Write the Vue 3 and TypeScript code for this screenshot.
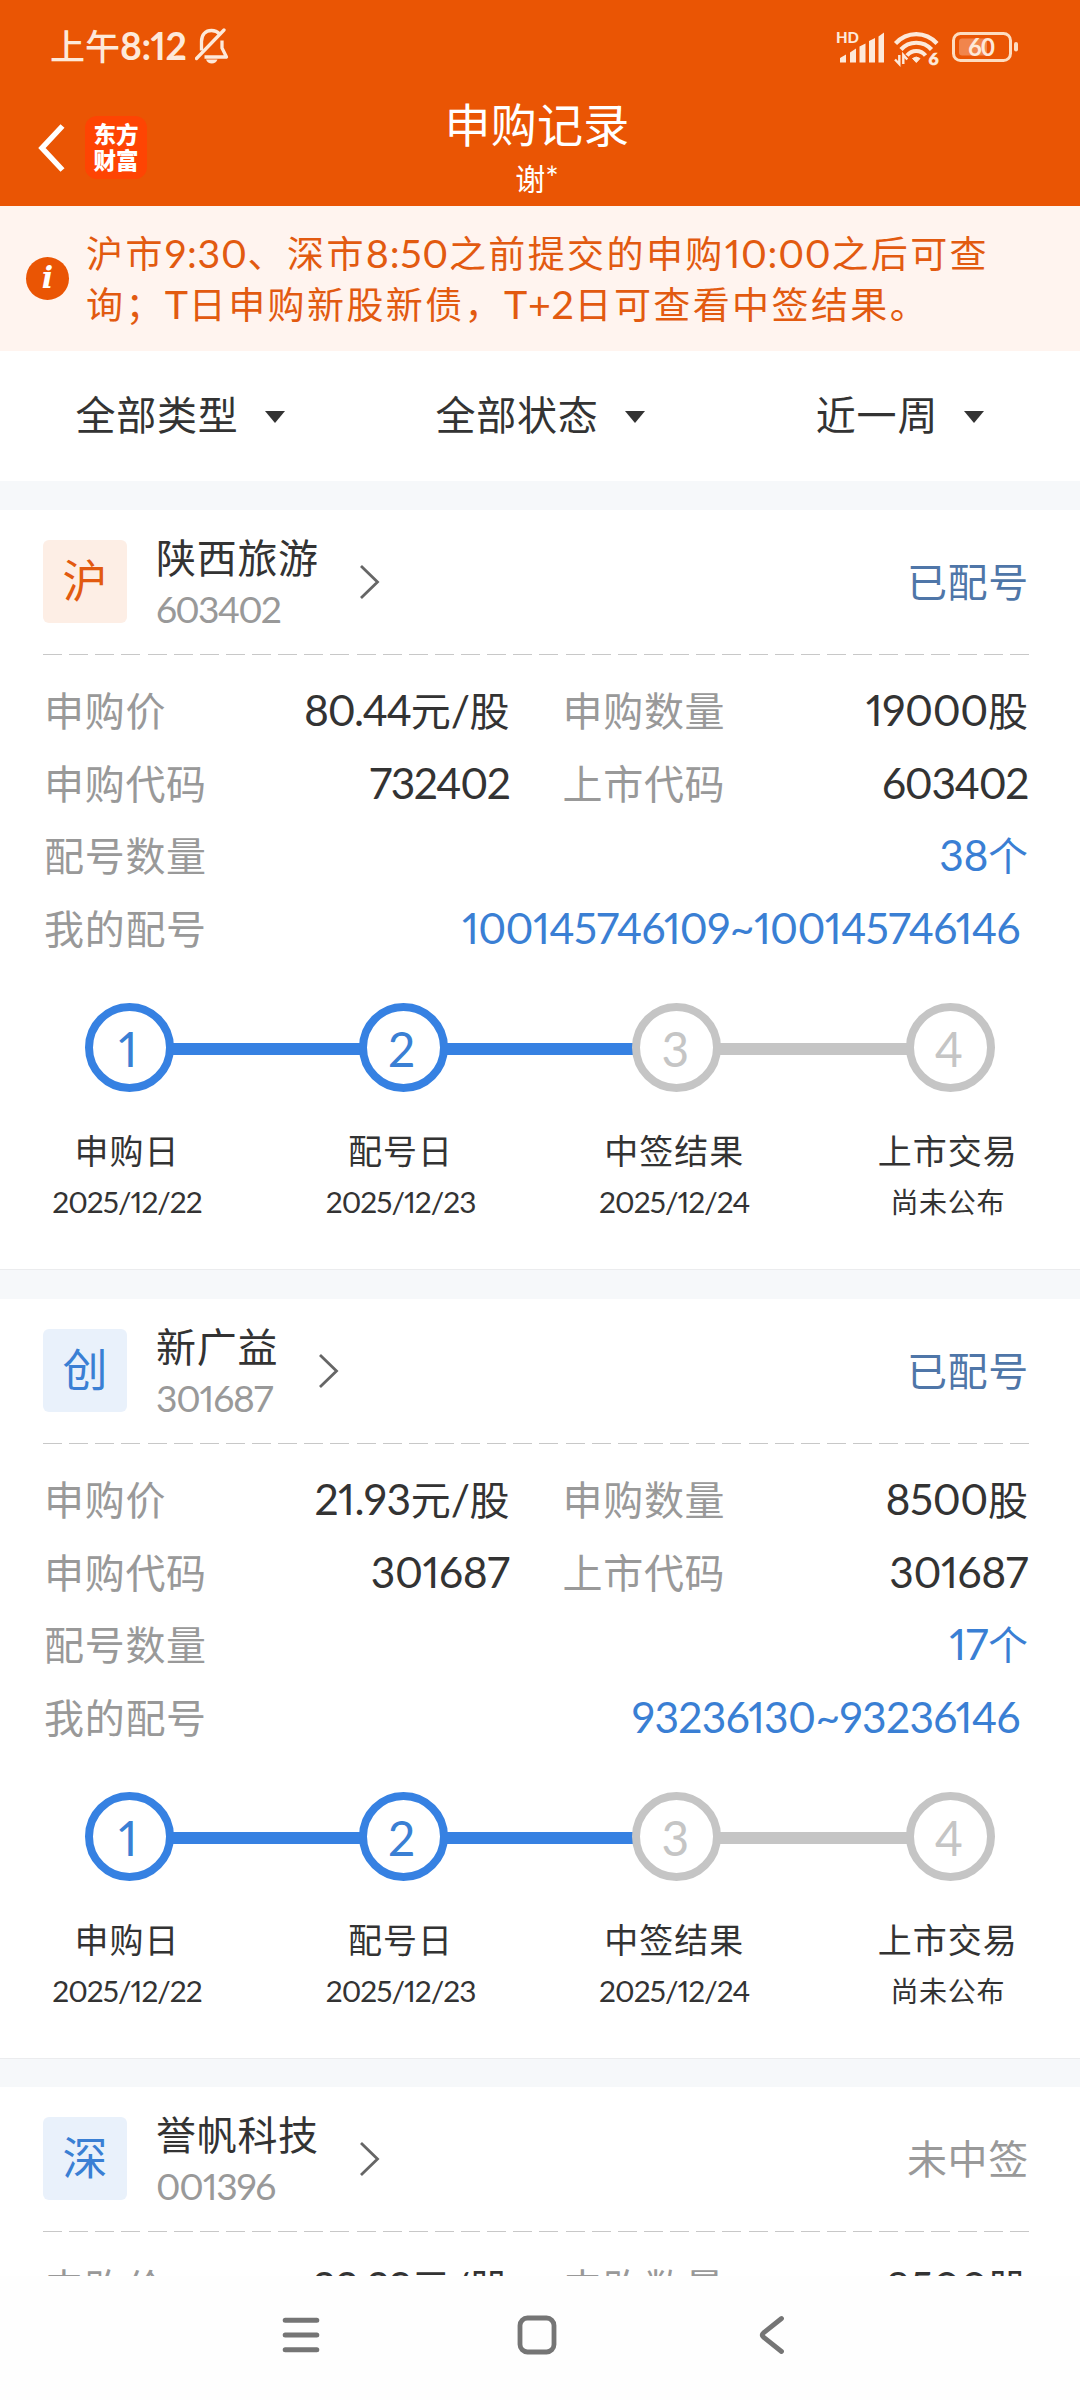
<script setup lang="ts">
import { h } from 'vue'

interface Step { title: string; date: string; done: boolean }
interface Record {
  market: string
  tone: 'orange' | 'blue'
  name: string
  code: string
  status: string
  won: boolean
  price: string
  amount: string
  applyCode: string
  listCode: string
  count: string
  numbers: string
}

// Latin and digit runs use their own face and size next to Chinese text;
// runs of wide digits only are set a little tighter.
const Mix = (props: { v: string }) =>
  h(
    'span',
    { class: 'mix' },
    (props.v.match(/[\x21-\x7e]+|[^\x21-\x7e]+/g) ?? []).map((run) =>
      /^[\x21-\x7e]/.test(run)
        ? h('span', { class: ['num', { tight: /^[02-9.]{5,}$/.test(run) }] }, run)
        : run
    )
  )
Mix.props = ['v']

const filters: string[] = ['全部类型', '全部状态', '近一周']

const steps: Step[] = [
  { title: '申购日', date: '2025/12/22', done: true },
  { title: '配号日', date: '2025/12/23', done: true },
  { title: '中签结果', date: '2025/12/24', done: false },
  { title: '上市交易', date: '尚未公布', done: false },
]

const records: Record[] = [
  {
    market: '沪', tone: 'orange', name: '陕西旅游', code: '603402', status: '已配号', won: true,
    price: '80.44元/股', amount: '19000股', applyCode: '732402', listCode: '603402',
    count: '38个', numbers: '100145746109~100145746146',
  },
  {
    market: '创', tone: 'blue', name: '新广益', code: '301687', status: '已配号', won: true,
    price: '21.93元/股', amount: '8500股', applyCode: '301687', listCode: '301687',
    count: '17个', numbers: '93236130~93236146',
  },
  {
    market: '深', tone: 'blue', name: '誉帆科技', code: '001396', status: '未中签', won: false,
    price: '22.29元/股', amount: '8500股', applyCode: '', listCode: '', count: '', numbers: '',
  },
]
</script>

<template>
  <div class="screen">
    <header class="top">
      <div class="statusbar">
        <span class="clock"><Mix v="上午8:12" /></span>
        <svg class="bell" width="34" height="36" viewBox="0 0 34 36" fill="none" stroke="#fde9da" stroke-width="3.300">
          <path d="M6.500 22.500V13.500C6.500 6.500 10.500 2.500 16.500 2.500C19.800 2.500 22.500 3.600 24.500 5.800" />
          <path d="M27 12.500V20L31.500 29H9.500" stroke-linejoin="round" />
          <path d="M1.500 30.500L29 2" stroke-linecap="round" />
          <path d="M11 31.500H22.500C21.500 34.300 19.500 35.500 16.800 35.500C14 35.500 12 34.300 11 31.500Z" fill="#fde9da" stroke="none" />
        </svg>
        <div class="sys">
          <svg width="48" height="34" viewBox="0 0 48 34" fill="#fde9da">
            <text x="-1" y="13" font-family="Lato" font-weight="900" font-size="15">HD</text>
            <path d="M3 32.500V28L9 24.500V32.500ZM13 32.500V22.500L19 18.500V32.500ZM22.500 32.500V16.500L28.500 13.500V32.500ZM32 32.500V11L38 8V32.500ZM41.500 32.500V6.500L47 2.500V32.500Z" />
          </svg>
          <svg class="wifi" width="46" height="36" viewBox="0 0 46 36">
            <g fill="none" stroke="#fde9da" stroke-width="4.200">
              <path d="M1.500 13.500C13 1 31.500 1 43 13.500" />
              <path d="M7 19.500C15 10.500 29.500 10.500 37.500 19.500" />
              <path d="M13 25.500C18 19.500 26.500 19.500 31.500 25.500" />
            </g>
            <path d="M18.500 28.500Q22.300 25.500 26 28.500L22.300 32.500Z" fill="#fde9da" stroke="#fde9da" />
            <path d="M5.300 25V34L1 29.500M9.300 34V25L13.300 29.500" fill="none" stroke="#fde9da" stroke-width="2.400" />
            <text x="34.500" y="34.500" fill="#fde9da" stroke="#fde9da" stroke-width=".6" font-family="Lato" font-weight="900" font-size="17.500">6</text>
          </svg>
          <svg class="battery" width="68" height="32" viewBox="0 0 68 32">
            <rect x="1.500" y="1.500" width="57" height="27" rx="7" fill="none" stroke="#fddcc0" stroke-width="3" />
            <path d="M10 6.500H35V23.500H10Q7 23.500 7 20.500V9.500Q7 6.500 10 6.500Z" fill="#f1854c" />
            <rect x="62" y="10" width="4" height="9.500" rx="2" fill="#fddcc0" />
            <text x="16" y="23.500" fill="#fde9da" font-family="Lato" font-weight="700" font-size="24" textLength="27">60</text>
          </svg>
        </div>
      </div>
      <div class="navbar">
        <div class="left">
          <svg width="28" height="48" viewBox="0 0 28 48" fill="none" stroke="#fff" stroke-width="5.500">
            <path d="M25.500 2L5 24L25.500 46" />
          </svg>
          <div class="logo"><span>东方</span><span>财富</span></div>
        </div>
        <div class="title">
          <h1>申购记录</h1>
          <p><Mix v="谢*" /></p>
        </div>
      </div>
    </header>

    <section class="notice">
      <div class="info">i</div>
      <div class="msg">
        <div><Mix v="沪市9:30、深市8:50之前提交的申购10:00之后可查" /></div>
        <div><Mix v="询；T日申购新股新债，T+2日可查看中签结果。" /></div>
      </div>
    </section>

    <section class="filters">
      <div v-for="f in filters" :key="f" class="filter">
        <span>{{ f }}</span><i class="caret"></i>
      </div>
    </section>

    <main class="list">
      <template v-for="(r, i) in records" :key="r.code">
        <div class="sep" :class="{ first: i === 0, last: i === 2 }"></div>
        <article class="card">
          <div class="head">
            <div class="badge" :class="r.tone"><span>{{ r.market }}</span></div>
            <div class="stock">
              <div class="name">{{ r.name }}</div>
              <div class="code"><Mix :v="r.code" /></div>
            </div>
            <svg class="go" width="22" height="36" viewBox="0 0 22 36" fill="none" stroke="#666" stroke-width="2.800">
              <path d="M2 2L18.500 18L2 34" />
            </svg>
            <div class="state" :class="{ won: r.won }">{{ r.status }}</div>
          </div>
          <div class="dash"></div>
          <div class="rows">
            <div class="row">
              <div class="cell"><span class="lab">申购价</span><span class="val"><Mix :v="r.price" /></span></div>
              <div class="cell"><span class="lab">申购数量</span><span class="val"><Mix :v="r.amount" /></span></div>
            </div>
            <template v-if="r.numbers">
              <div class="row">
                <div class="cell"><span class="lab">申购代码</span><span class="val"><Mix :v="r.applyCode" /></span></div>
                <div class="cell"><span class="lab">上市代码</span><span class="val"><Mix :v="r.listCode" /></span></div>
              </div>
              <div class="row">
                <div class="cell"><span class="lab">配号数量</span><span class="val link"><Mix :v="r.count" /></span></div>
              </div>
              <div class="row">
                <div class="cell"><span class="lab">我的配号</span><span class="val link range"><Mix :v="r.numbers" /></span></div>
              </div>
            </template>
          </div>
          <div v-if="r.numbers" class="steps">
            <div v-for="(s, k) in steps" :key="s.title" class="step" :class="{ done: s.done }">
              <div class="track">
                <div class="dot"><Mix :v="String(k + 1)" /></div>
                <div v-if="k < 3" class="bar"></div>
              </div>
              <div class="st">{{ s.title }}</div>
              <div class="sd"><Mix :v="s.date" /></div>
            </div>
          </div>
        </article>
      </template>
    </main>

    <nav class="sysnav">
      <svg width="38" height="40" viewBox="0 0 38 40" stroke="#757575" stroke-width="5" stroke-linecap="round">
        <path d="M3.200 5.300H34.800M3.200 20H34.800M3.200 34.700H34.800" />
      </svg>
      <svg width="40" height="40" viewBox="0 0 40 40" fill="none" stroke="#757575" stroke-width="4.800">
        <rect x="3" y="3" width="34" height="34" rx="7.500" />
      </svg>
      <svg width="26" height="40" viewBox="0 0 26 40" fill="none" stroke="#757575" stroke-width="4.800" stroke-linecap="round">
        <path d="M22.500 3.500L4.500 17.800Q1.800 20 4.500 22.200L22.500 36.500" />
      </svg>
    </nav>
  </div>
</template>

<style>
body { background: #fff; }
.mix { white-space: nowrap; }
.mix .num {
  font-family: Lato, "Noto Sans", sans-serif;
  font-size: 1.065em;
  line-height: 1;
  font-feature-settings: "pnum" 1;
}
</style>

<style scoped>
.screen {
  width: 1080px;
  height: 2400px;
  overflow: hidden;
  display: flex;
  flex-direction: column;
  background: #fff;
  color: #333;
  font-family: "Noto Sans CJK SC", sans-serif;
  font-size: 40px;
}
.top { height: 206px; background: #ea5504; color: #fff; flex: none; }
.statusbar { display: flex; align-items: flex-start; height: 92px; padding: 0 60px 0 50px; color: #fde9da; }
.clock { font-size: 35px; line-height: 52px; padding-top: 19px; font-weight: 500; width: 145px; white-space: nowrap; }
.clock :deep(.num) { font-weight: 700; letter-spacing: -.5px; }
.bell { margin-top: 28px; }
.sys { margin-left: auto; display: flex; padding-top: 30px; }
.sys svg { overflow: visible; }
.wifi { margin-left: 9px; }
.battery { margin: 2px 0 0 12px; }
.navbar { display: flex; height: 114px; }
.left { display: flex; width: 300px; padding: 24px 0 0 37px; box-sizing: border-box; align-items: flex-start; }
.left svg { margin-top: 8px; }
.logo {
  width: 62px; height: 63px; margin-left: 20px; border-radius: 12px; background: #fe4403;
  display: flex; flex-direction: column; align-items: center; justify-content: center;
  font-size: 22.500px; line-height: 26px; font-weight: 900; padding-bottom: 3px; box-sizing: border-box;
}
.title { width: 480px; text-align: center; }
h1 { margin: 0; font-size: 46px; line-height: 60px; font-weight: 400; letter-spacing: .3px; padding-right: 6px; }
p { margin: 0; font-size: 30px; line-height: 44px; padding-right: 6px; margin-top: 3px; }
.notice { height: 145px; flex: none; background: #fff4ef; color: #e25a10; display: flex; }
.info {
  width: 43px; height: 43px; border-radius: 50%; background: #ea5504; color: #fff; margin: 51px 0 0 26px;
  font: italic 700 30px/42px "DejaVu Serif", "Liberation Serif", serif; text-align: center; flex: none;
}
.msg { margin: 21px 0 0 17px; font-size: 37px; line-height: 51px; letter-spacing: 2.400px; white-space: nowrap; }
.msg :deep(.num) { letter-spacing: .7px; }
.filters { height: 130px; flex: none; display: grid; grid-template-columns: repeat(3, 360px); padding-bottom: 6px; box-sizing: border-box; }
.filter { display: flex; align-items: center; justify-content: center; gap: 26px; letter-spacing: .8px; }
.caret { width: 0; height: 0; border: 10px solid transparent; border-top: 12px solid #333; border-bottom: 0; margin-top: 7px; }
.list { height: 1795px; flex: none; overflow: hidden; }
.sep { height: 30px; box-sizing: border-box; background: #f6f8fa; border-top: 1px solid #ebecee; }
.sep.first { height: 29px; border-top: 0; }
.sep.last { height: 29px; }
.card { height: 759px; background: #fff; }
.head { height: 144px; display: flex; align-items: flex-start; padding: 0 51px 0 43px; }
.badge {
  width: 84px; height: 83px; margin-top: 30px; border-radius: 6px; display: flex; align-items: center; justify-content: center;
  font-size: 45px; line-height: 60px; flex: none;
}
.badge span { margin-top: -5px; }
.badge.orange { background: #fdeee5; color: #e25a10; }
.badge.blue { background: #e9f1fb; color: #3a7fd4; }
.stock { margin: 17px 0 0 29px; white-space: nowrap; }
.name { font-size: 40px; letter-spacing: .7px; line-height: 58px; }
.code { font-size: 35px; line-height: 44px; color: #999; padding-top: 1px; }
.code :deep(.num) { letter-spacing: -1.200px; }
.code :deep(.tight) { letter-spacing: -1.800px; }
.go { margin: 54px 0 0 40px; }
.state { margin: 41px 0 0 auto; line-height: 58px; letter-spacing: .7px; color: #999; }
.state.won { color: #4f76a8; }
.dash { height: 1px; margin: 0 51px 0 43px; background: repeating-linear-gradient(90deg, #c8c8c8 0 19px, transparent 19px 26.130px); }
.rows { padding: 18px 52px 0 44px; }
.row { display: flex; gap: 53px; height: 72.500px; }
.cell { flex: 1; display: flex; justify-content: space-between; line-height: 72px; white-space: nowrap; }
.lab { color: #999; letter-spacing: .7px; }
.val :deep(.num) { letter-spacing: -.4px; }
.val :deep(.tight) { letter-spacing: -1.400px; }
.link { color: #3a7fd4; }
.range { padding-right: 8px; }
.range :deep(.num) { letter-spacing: -.65px; }
.steps { display: flex; padding: 40px 0 0 85px; }
.step { width: 273.600px; flex: none; }
.track { display: flex; align-items: center; }
.dot {
  width: 89px; height: 89px; box-sizing: border-box; border: 8.500px solid #c5c5c5; border-radius: 50%; color: #c5c5c5;
  display: flex; align-items: center; justify-content: center; font-size: 45px; line-height: 60px; flex: none; padding-right: 3px;
}
.bar { flex: 1; height: 12px; background: #c5c5c5; margin: 3px -3px 0 -3px; }
.done .dot { border-color: #3681e2; color: #3a7fd4; }
.done .bar { background: #3681e2; }
.st { width: 240px; margin-left: -78px; text-align: center; font-size: 34px; letter-spacing: 1px; line-height: 50px; margin-top: 33px; }
.sd { width: 240px; margin-left: -78px; text-align: center; font-size: 28px; line-height: 42px; letter-spacing: .7px; margin-top: 5px; }
.sd :deep(.num) { letter-spacing: -.95px; }
.sysnav { flex: 1; background: #fefefe; display: flex; align-items: center; padding: 0 0 6px 282px; }
.sysnav svg:nth-child(2) { margin-left: 197px; }
.sysnav svg:nth-child(3) { margin-left: 202px; }
</style>
